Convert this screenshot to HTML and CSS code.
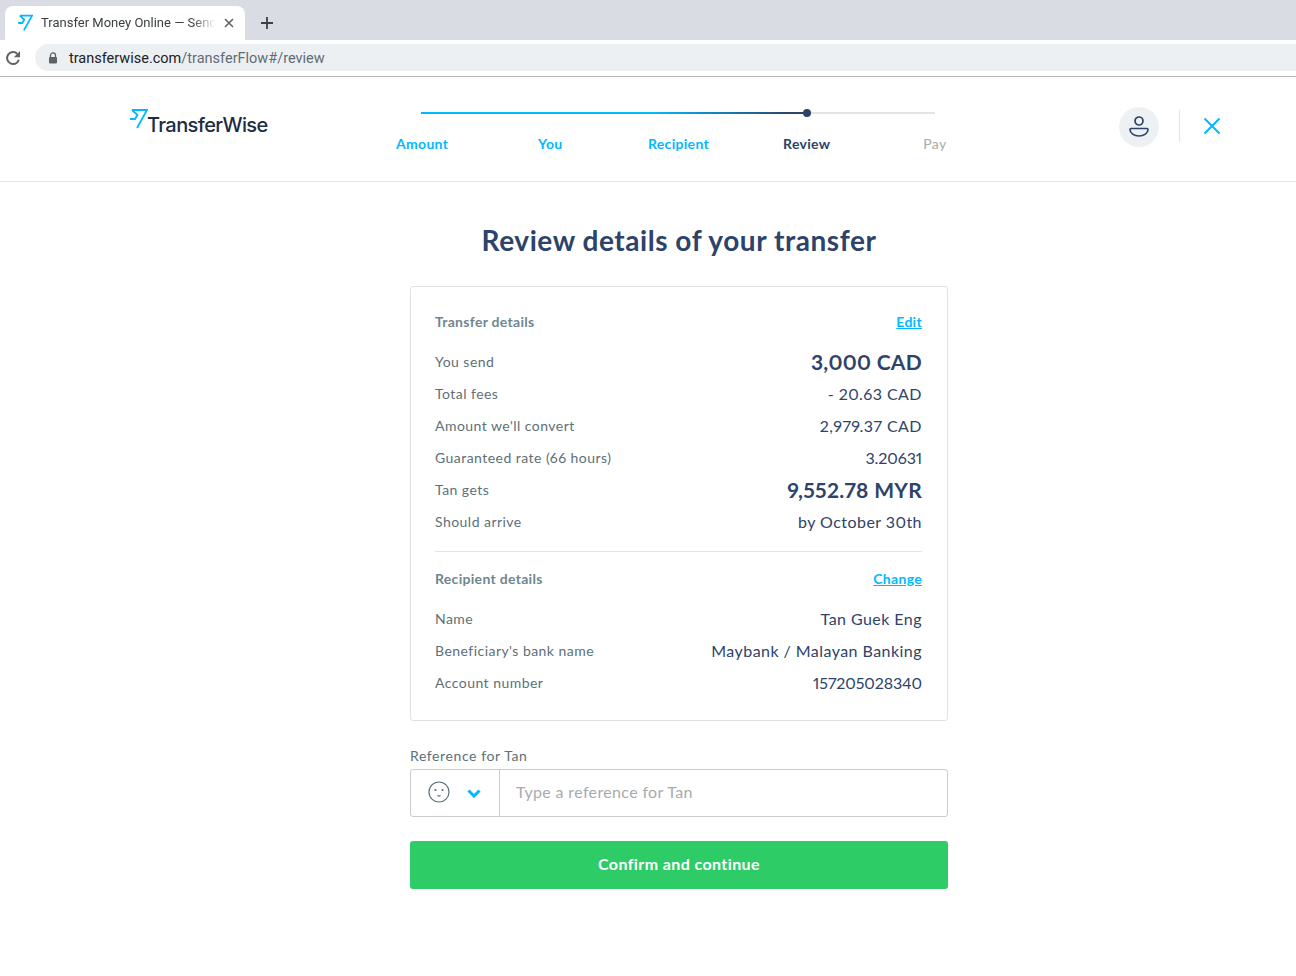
FILE: index.html
```html
<!DOCTYPE html>
<html lang="en">
<head>
    <meta charset="UTF-8">
    <meta name="viewport" content="width=device-width, initial-scale=1.0">
    <title>TransferWise - Review</title>
    <link rel="stylesheet" href="styles.css">
</head>
<body>
    <div class="tabstrip">
        <div class="tab">
            <svg class="tab-icon" width="15" height="18" viewBox="0 0 18 22"><path d="M2 2h15L7 20M17 2M2 2l5.500 5L5 11H0" fill="none" stroke="#00b9ff" stroke-width="2.200"/></svg>
            <span class="tab-title">Transfer Money Online — Send</span>
            <svg width="10" height="10" viewBox="0 0 10 10"><path d="M1 1l8 8M9 1l-8 8" stroke="#5f6368" stroke-width="1.600"/></svg>
        </div>
        <svg class="new-tab" width="12" height="12" viewBox="0 0 12 12"><path d="M6 0v12M0 6h12" stroke="#3c4043" stroke-width="1.800"/></svg>
    </div>
    <div class="toolbar">
        <svg width="16" height="16" viewBox="0 0 16 16"><path d="M13.800 9.800A6 6 0 1 1 12.200 3.700" fill="none" stroke="#5f6368" stroke-width="2"/><path d="M15 1v6.200H8.800z" fill="#5f6368"/></svg>
        <div class="urlbar">
            <svg width="10" height="12" viewBox="0 0 10 12"><path d="M2.500 5V3.400a2.500 2.500 0 0 1 5 0V5" fill="none" stroke="#5f6368" stroke-width="1.300"/><rect x="1" y="5" width="8" height="6.500" rx="1" fill="#5f6368"/></svg>
            <span class="url"><span class="url-host">transferwise.com</span>/transferFlow#/review</span>
        </div>
    </div>

    <header class="site-header">
        <div class="logo">
            <svg class="logo-mark" width="18" height="22" viewBox="0 0 18 22"><path d="M2 2h15L7 20M2 2l5.500 5L5 11H0" fill="none" stroke="#00b9ff" stroke-width="1.800"/></svg>
            <span class="logo-text">TransferWise</span>
        </div>
        <div class="stepper">
            <div class="track">
                <div class="track-fill"></div>
                <div class="track-dot"></div>
            </div>
            <ol class="steps">
                <li class="step done">Amount</li>
                <li class="step done">You</li>
                <li class="step done">Recipient</li>
                <li class="step current">Review</li>
                <li class="step">Pay</li>
            </ol>
        </div>
        <div class="header-actions">
            <div class="avatar">
                <svg width="20" height="24" viewBox="0 0 20 24"><circle cx="10" cy="6" r="4" fill="none" stroke="#2e4369" stroke-width="1.700"/><path d="M2 13.500h16c.6 0 1 .4 1 1 0 3.600-4 6.500-9 6.500s-9-2.900-9-6.500c0-.6.400-1 1-1z" fill="none" stroke="#2e4369" stroke-width="1.700"/></svg>
            </div>
            <div class="header-sep"></div>
            <svg width="18" height="18" viewBox="0 0 18 18"><path d="M1.500 1.500l15 15M16.500 1.500l-15 15" stroke="#00b9ff" stroke-width="2"/></svg>
        </div>
    </header>

    <main class="review">
        <h1>Review details of your transfer</h1>
        <section class="card">
            <div class="card-head">
                <h2>Transfer details</h2>
                <a href="#">Edit</a>
            </div>
            <div class="row"><span>You send</span><strong>3,000 CAD</strong></div>
            <div class="row"><span>Total fees</span><b>- 20.63 CAD</b></div>
            <div class="row"><span>Amount we'll convert</span><b>2,979.37 CAD</b></div>
            <div class="row"><span>Guaranteed rate (66 hours)</span><b class="num">3.20631</b></div>
            <div class="row"><span>Tan gets</span><strong>9,552.78 MYR</strong></div>
            <div class="row"><span>Should arrive</span><b>by October 30th</b></div>
            <hr>
            <div class="card-head">
                <h2>Recipient details</h2>
                <a href="#">Change</a>
            </div>
            <div class="row"><span>Name</span><b>Tan Guek Eng</b></div>
            <div class="row"><span>Beneficiary's bank name</span><b>Maybank / Malayan Banking</b></div>
            <div class="row"><span>Account number</span><b class="num">157205028340</b></div>
        </section>
        <label class="ref-label" for="ref">Reference for Tan</label>
        <div class="ref-group">
            <div class="emoji-picker">
                <svg width="22" height="22" viewBox="0 0 22 22"><circle cx="11" cy="11" r="10" fill="none" stroke="#5d7079" stroke-width="1.200"/><circle cx="7.500" cy="9" r="1.100" fill="#5d7079"/><circle cx="14.500" cy="9" r="1.100" fill="#5d7079"/><path d="M9.500 14.500c1 .7 2 .7 3 0" fill="none" stroke="#5d7079" stroke-width="1.200"/></svg>
                <svg class="chevron" width="14" height="9" viewBox="0 0 14 9"><path d="M1.500 1.500L7 7l5.500-5.500" fill="none" stroke="#00b9ff" stroke-width="3"/></svg>
            </div>
            <input id="ref" type="text" placeholder="Type a reference for Tan">
        </div>
        <button type="button"><span>Confirm and continue</span></button>
    </main>
</body>
</html>
```

FILE: styles.css
```css
* {
    box-sizing: border-box;
}
body {
    font-family: Lato, "Noto Sans", sans-serif;
    font-variant-numeric: proportional-nums;
    margin: 0;
    height: 976px;
    overflow: hidden;
    background: #fff;
    color: #2e4369;
}

/* browser chrome */
.tabstrip {
    height: 40px;
    background: #dadce4;
    padding: 6px 0 0 5px;
    display: flex;
    align-items: center;
    font-family: Roboto, sans-serif;
}
.tab {
    width: 240px;
    height: 34px;
    background: #fff;
    border-radius: 8px 8px 0 0;
    display: flex;
    align-items: center;
    padding: 0 11px 0 13px;
}
.tab-icon {
    flex: none;
    margin-right: 8px;
}
.tab-title {
    flex: 1;
    font-size: 13px;
    color: #3c4043;
    white-space: nowrap;
    -webkit-mask-image: linear-gradient(to right, #000 86%, transparent 99%);
    mask-image: linear-gradient(to right, #000 86%, transparent 99%);
    margin-right: 7px;
    line-height: 16px;
    padding-bottom: 1px;
}
.new-tab {
    margin: 0 0 0 16px;
}
.toolbar {
    height: 37px;
    padding: 4px 0 5px 5px;
    display: flex;
    align-items: center;
    gap: 14px;
    border-bottom: 1px solid #b3b3b3;
}
.urlbar {
    flex: 1;
    height: 27px;
    background: #edf0f2;
    border-radius: 14px 0 0 14px;
    display: flex;
    align-items: center;
    padding-left: 13px;
    gap: 11px;
}
.url {
    font-family: Roboto, sans-serif;
    font-size: 14.5px;
    color: #5f6c76;
    padding-top: 1px;
}
.url-host {
    color: #202124;
}

/* site header */
.site-header {
    height: 105px;
    border-bottom: 1px solid #e2e4e6;
    display: flex;
    position: relative;
    padding-left: 130px;
}
.logo {
    width: 227px;
    display: flex;
    padding-top: 31px;
}
.logo-mark {
    flex: none;
}
.logo-text {
    font-family: Inter, sans-serif;
    font-size: 20px;
    font-weight: 500;
    letter-spacing: -0.6px;
    color: #1e2b45;
    margin: 4px 0 0 -1px;
    line-height: 26px;
}
.stepper {
    width: 642px;
    padding-top: 35px;
}
.track {
    height: 2px;
    margin: 0 64px;
    background: #e2e4e6;
    position: relative;
}
.track-fill {
    width: 386px;
    height: 2px;
    background: linear-gradient(to right, #00b9ff 60%, #2e4369 96%);
}
.track-dot {
    position: absolute;
    left: 382px;
    top: -3px;
    width: 8px;
    height: 8px;
    border-radius: 50%;
    background: #2e4369;
}
.steps {
    list-style: none;
    margin: 20px 0 0;
    padding: 0 0 0 1px;
    display: grid;
    grid-template-columns: repeat(5, 1fr);
    text-align: center;
    font-size: 14px;
    line-height: 20px;
    font-weight: 700;
    letter-spacing: 0.3px;
    color: #a8abae;
}
.step:last-child {
    font-weight: 400;
}
.step.done {
    color: #00b9ff;
}
.step.current {
    color: #2e4369;
}
.header-actions {
    margin-left: 120px;
    padding-top: 29px;
    height: 69px;
    display: flex;
    align-items: center;
}
.avatar {
    width: 40px;
    height: 40px;
    border-radius: 50%;
    background: #eef1f4;
    display: flex;
    align-items: center;
    justify-content: center;
    margin-top: 1px;
}
.header-sep {
    width: 1px;
    height: 32px;
    background: #e2e4e6;
    margin: 0 23px 0 20px;
}

/* review */
.review {
    width: 538px;
    margin-left: 410px;
}
h1 {
    margin: 40px 0 28px;
    font-size: 28px;
    line-height: 36px;
    font-weight: 700;
    letter-spacing: 0.55px;
    text-align: center;
    color: #2e4369;
}
.card {
    height: 435px;
    border: 1px solid #dfe2e5;
    border-radius: 3px;
    padding: 23px 25px 23px 24px;
}
.card-head {
    display: flex;
    justify-content: space-between;
    align-items: center;
    height: 22px;
    margin-bottom: 13px;
}
.card-head h2 {
    margin: 0;
    font-size: 14px;
    font-weight: 700;
    letter-spacing: 0.3px;
    color: #6f8691;
}
.card-head a {
    font-size: 14px;
    font-weight: 700;
    letter-spacing: 0.3px;
    color: #00b9ff;
}
.row {
    display: flex;
    justify-content: space-between;
    align-items: center;
    height: 32px;
    font-size: 14px;
    letter-spacing: 0.46px;
    color: #5d7079;
}
.row b {
    font-size: 16px;
    font-weight: 400;
    letter-spacing: 0.45px;
    color: #2e4369;
}
.row b.num {
    letter-spacing: -0.1px;
}
.row strong {
    font-size: 21px;
    font-weight: 700;
    letter-spacing: 0.3px;
    color: #2e4369;
}
hr {
    border: 0;
    border-top: 1px solid #e2e4e6;
    margin: 14px 0 15px;
}
.ref-label {
    display: block;
    margin-top: 25px;
    font-size: 14px;
    line-height: 20px;
    letter-spacing: 0.6px;
    color: #5d7079;
}
.ref-group {
    display: flex;
    height: 48px;
    margin-top: 3px;
    border: 1px solid #c9cbce;
    border-radius: 3px;
}
.emoji-picker {
    width: 89px;
    flex: none;
    border-right: 1px solid #c9cbce;
    display: flex;
    align-items: center;
    gap: 17px;
    padding: 0 0 3px 17px;
}
.chevron {
    margin-top: 3px;
}
.ref-group input {
    flex: 1;
    border: 0;
    outline: 0;
    padding: 0 16px 3px;
    font-family: inherit;
    font-size: 16px;
    letter-spacing: 0.35px;
    background: transparent;
}
.ref-group input::placeholder {
    color: #a8abae;
}
button {
    display: block;
    width: 100%;
    height: 48px;
    margin-top: 24px;
    padding: 0 0 3px;
    border: 0;
    border-radius: 3px;
    background: #2ecc66;
    color: #fff;
    font-family: inherit;
    font-size: 16px;
    font-weight: 700;
    letter-spacing: 0.4px;
    cursor: pointer;
}
```
